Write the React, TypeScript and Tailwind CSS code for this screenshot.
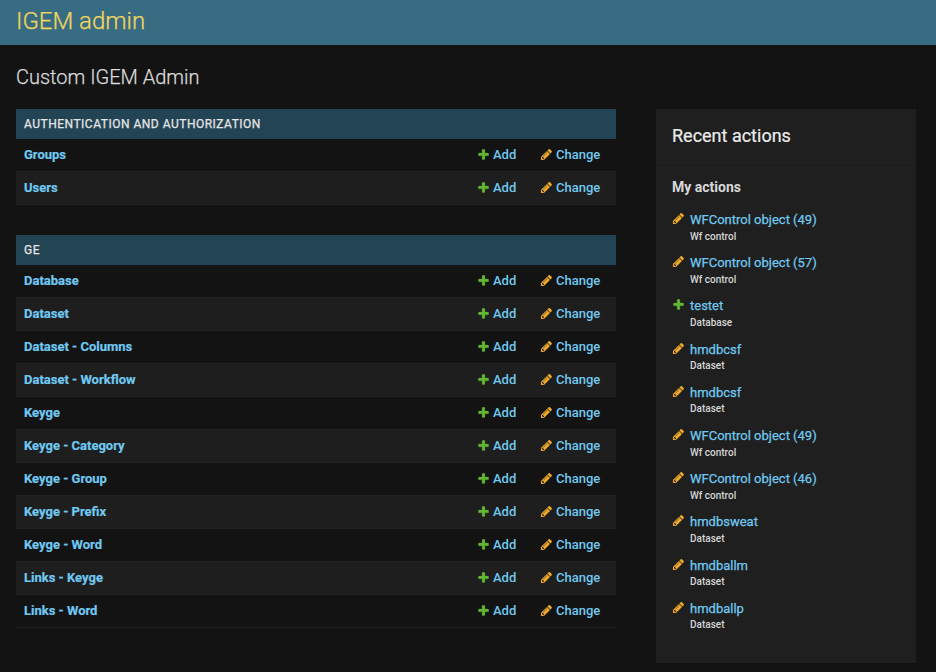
type IconProps = { className?: string };

function AddIcon({ className = "" }: IconProps) {
  return (
    <svg viewBox="0 0 1792 1792" width="13" height="13" className={`shrink-0 ${className}`} fill="#63b734" stroke="#63b734" strokeWidth="40">
      <path d="M1600 796v192q0 40-28 68t-68 28h-416v416q0 40-28 68t-68 28h-192q-40 0-68-28t-28-68v-416h-416q-40 0-68-28t-28-68v-192q0-40 28-68t68-28h416v-416q0-40 28-68t68-28h192q40 0 68 28t28 68v416h416q40 0 68 28t28 68z" />
    </svg>
  );
}

function ChangeIcon({ className = "" }: IconProps) {
  return (
    <svg viewBox="0 0 1792 1792" width="13" height="13" className={`shrink-0 ${className}`} fill="#efaa2b">
      <path d="M491 1536l91-91-235-235-91 91v107h128v128h107zm523-928q0-22-22-22-10 0-17 7l-542 542q-7 7-7 17 0 22 22 22 10 0 17-7l542-542q7-7 7-17zm-54-192l416 416-832 832h-416v-416zm683 96q0 53-37 90l-166 166-416-416 166-165q36-38 90-38 53 0 91 38l235 234q37 39 37 91z" />
    </svg>
  );
}

function Module({ title, models }: { title: string; models: string[] }) {
  return (
    <section className="mb-[30px]">
      <h2 className="h-[30px] bg-[#234454] px-2 text-[12px] leading-[30px] font-normal tracking-[0.5px] text-[#e6e6e6] uppercase [-webkit-text-stroke:0.25px]">
        {title}
      </h2>
      {models.map((name) => (
        <div
          key={name}
          className="flex h-[33px] items-center border-b border-[#242424] pl-2 text-[13px] leading-4 text-[#70c9f1] odd:bg-[#1e1e1e]"
        >
          <a className="flex-1 font-bold [-webkit-text-stroke:0.2px]">{name}</a>
          <a className="flex w-[63px] items-start gap-[3px] font-medium">
            <AddIcon className="mt-[0.5px]" />
            Add
          </a>
          <a className="flex w-[76px] items-start gap-[3px] font-medium">
            <ChangeIcon className="mt-[0.5px]" />
            Change
          </a>
        </div>
      ))}
    </section>
  );
}

const geModels = [
  "Database",
  "Dataset",
  "Dataset - Columns",
  "Dataset - Workflow",
  "Keyge",
  "Keyge - Category",
  "Keyge - Group",
  "Keyge - Prefix",
  "Keyge - Word",
  "Links - Keyge",
  "Links - Word",
];

const actions = [
  { label: "WFControl object (49)", kind: "Wf control" },
  { label: "WFControl object (57)", kind: "Wf control" },
  { label: "testet", kind: "Database", added: true },
  { label: "hmdbcsf", kind: "Dataset" },
  { label: "hmdbcsf", kind: "Dataset" },
  { label: "WFControl object (49)", kind: "Wf control" },
  { label: "WFControl object (46)", kind: "Wf control" },
  { label: "hmdbsweat", kind: "Dataset" },
  { label: "hmdballm", kind: "Dataset" },
  { label: "hmdballp", kind: "Dataset" },
];

export default function App() {
  return (
    <div className="h-[672px] overflow-hidden bg-[#131313] font-['Roboto',sans-serif] text-[#eeeeee]">
      <header className="flex h-[45px] items-center bg-[#386c82] px-4 pb-1">
        <h1 className="text-[24px] leading-7 font-light text-[#f0d55f] [-webkit-text-stroke:0.25px]">IGEM admin</h1>
      </header>
      <main className="pt-[20px] pr-5 pl-4">
        <h1 className="mb-5 text-[20px] leading-6 font-light text-[#dadada] [-webkit-text-stroke:0.25px]">Custom IGEM Admin</h1>
        <div className="flex items-start gap-10">
          <div className="w-[600px]">
            <Module title="Authentication and Authorization" models={["Groups", "Users"]} />
            <Module title="GE" models={geModels} />
          </div>
          <aside className="h-[554px] w-[260px] bg-[#1f1f1f]">
            <h2 className="h-[54px] border-b border-[#242424] px-4 text-[18px] leading-[53px] font-normal text-[#ececec] [-webkit-text-stroke:0.2px]">
              Recent actions
            </h2>
            <h3 className="mt-4 px-4 text-[14px] leading-[17px] font-bold text-[#d8d8d8]">My actions</h3>
            <ul className="mt-4 px-4">
              {actions.map((a, i) => (
                <li key={i} className="flex h-[43.2px] gap-[5px]">
                  {a.added ? <AddIcon /> : <ChangeIcon />}
                  <div>
                    <a className="block text-[13px] leading-4 text-[#70c9f1] [-webkit-text-stroke:0.25px]">{a.label}</a>
                    <span className="mt-[2.6px] block text-[10px] leading-3 font-medium text-[#d6d6d6]">{a.kind}</span>
                  </div>
                </li>
              ))}
            </ul>
          </aside>
        </div>
      </main>
    </div>
  );
}
